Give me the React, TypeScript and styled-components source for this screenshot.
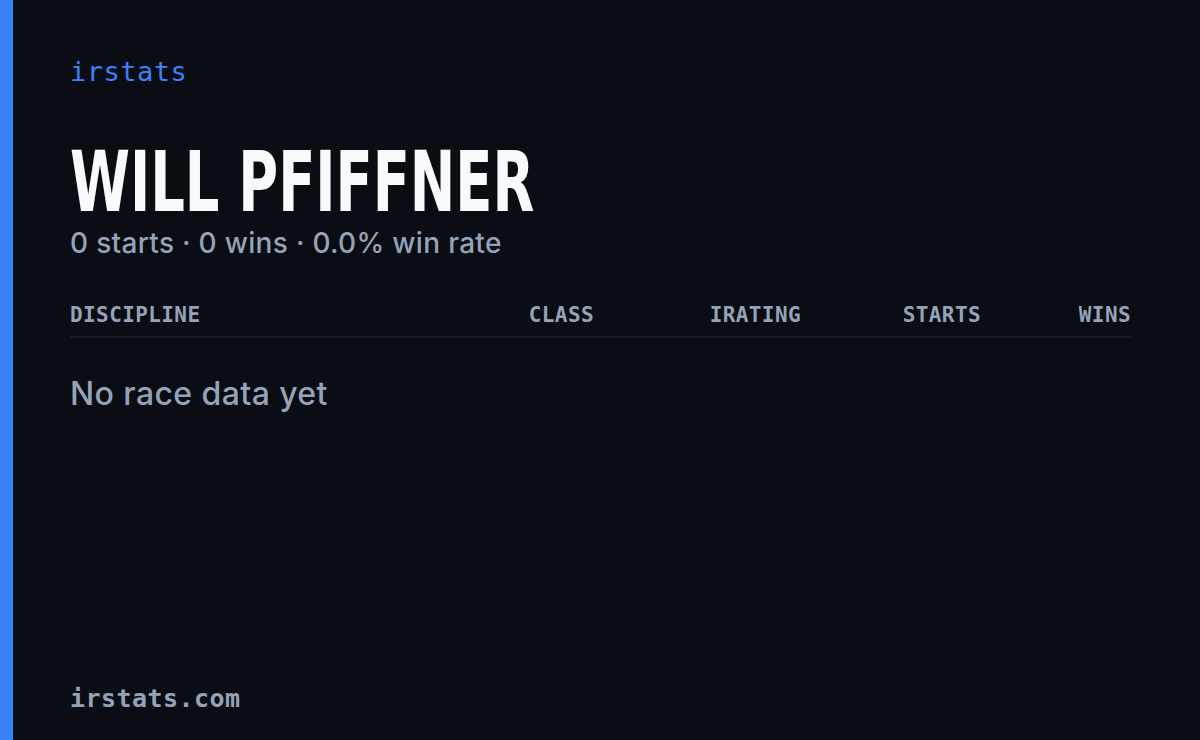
import styled, { createGlobalStyle } from "styled-components";

// 전역 스타일
const GlobalStyle = createGlobalStyle`
  html, body {
    margin: 0;
    padding: 0;
    background: #0a0d14;
  }
  * {
    box-sizing: border-box;
  }
`;

const MONO = `"DejaVu Sans Mono", "Liberation Mono", monospace`;
const SANS = `Inter, "Noto Sans", sans-serif`;

const Card = styled.div`
  width: 1200px;
  height: 740px;
  display: flex;
  background: #0a0d14;
  overflow: hidden;
`;

const AccentBar = styled.div`
  width: 13px;
  flex-shrink: 0;
  background: #3b82f6;
`;

const Content = styled.div`
  flex: 1;
  display: flex;
  flex-direction: column;
  padding: 56px 69px 26px 57px;
`;

const Brand = styled.div`
  font-family: ${MONO};
  font-size: 27px;
  letter-spacing: 0.5px;
  color: #3b82f6;
  line-height: 32px;
`;

const Name = styled.h1`
  margin: 52px 0 0;
  height: 84px;
  font-family: "DejaVu Sans", sans-serif;
  font-size: 84px;
  font-weight: 700;
  line-height: 84px;
  color: #f8fafc;
  text-transform: uppercase;
  white-space: nowrap;
`;

// 좁은 글꼴이 없어서 가로로 눌러줌
const NameText = styled.span`
  display: inline-block;
  transform: scaleX(0.647);
  transform-origin: left center;
`;

const Summary = styled.div`
  margin-top: 2px;
  font-family: ${SANS};
  font-size: 28px;
  font-weight: 500;
  letter-spacing: 0.3px;
  color: #94a3b8;
  line-height: 34px;
`;

const Table = styled.div`
  margin-top: 43px;
  display: flex;
  flex-direction: column;
`;

const HeaderRow = styled.div`
  display: grid;
  grid-template-columns: 1fr 140px 207px 180px 150px;
  padding-bottom: 9px;
  border-bottom: 2px solid #171b25;
`;

const HeaderCell = styled.div<{ $align?: "left" | "right" }>`
  font-family: ${MONO};
  font-size: 21px;
  font-weight: 700;
  letter-spacing: 0.4px;
  color: #94a3b8;
  line-height: 24px;
  text-align: ${(p) => p.$align ?? "right"};
`;

const Empty = styled.div`
  margin-top: 36px;
  font-family: ${SANS};
  font-size: 32px;
  font-weight: 500;
  letter-spacing: 0.4px;
  color: #94a3b8;
  line-height: 40px;
`;

const Footer = styled.div`
  margin-top: auto;
  font-family: ${MONO};
  font-size: 25px;
  font-weight: 700;
  letter-spacing: 0.45px;
  color: #94a3b8;
  line-height: 30px;
`;

const columns = ["CLASS", "IRATING", "STARTS", "WINS"];

export default function App() {
  const starts = 0;
  const wins = 0;
  const rate = starts > 0 ? (wins / starts) * 100 : 0;

  return (
    <>
      <GlobalStyle />
      <Card>
        <AccentBar />
        <Content>
          <Brand>irstats</Brand>
          <Name>
            <NameText>Will Pfiffner</NameText>
          </Name>
          <Summary>
            {starts} starts · {wins} wins · {rate.toFixed(1)}% win rate
          </Summary>
          <Table>
            <HeaderRow>
              <HeaderCell $align="left">DISCIPLINE</HeaderCell>
              {columns.map((c) => (
                <HeaderCell key={c}>{c}</HeaderCell>
              ))}
            </HeaderRow>
            <Empty>No race data yet</Empty>
          </Table>
          <Footer>irstats.com</Footer>
        </Content>
      </Card>
    </>
  );
}
